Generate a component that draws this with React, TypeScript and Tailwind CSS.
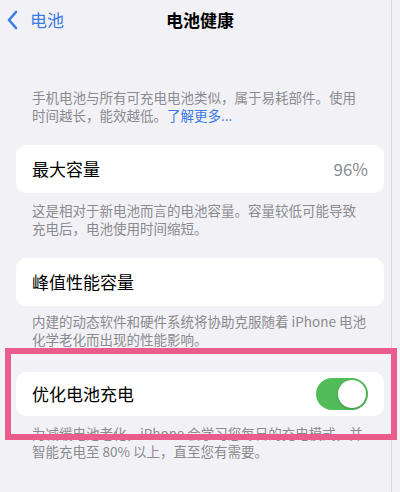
import React from "react";

const font = { fontFamily: '"Noto Sans CJK SC", "Noto Sans", sans-serif' };

function Note({ children }: { children: React.ReactNode }) {
  return <p className="px-8 text-[13.5px] leading-[18px] text-[#8a8a8f]">{children}</p>;
}

function Row({ label, right, tall = true }: { label: string; right?: React.ReactNode; tall?: boolean }) {
  return (
    <div
      className={
        "mx-4 rounded-[10px] bg-white px-4 flex items-center justify-between " + (tall ? "h-12" : "h-[44px]")
      }
    >
      <span className="text-[17px] text-black">{label}</span>
      {right}
    </div>
  );
}

export default function App() {
  return (
    <div className="relative w-[400px] h-[492px] overflow-hidden bg-[#f2f2f6]" style={font}>
      <div className="absolute right-[8px] top-0 h-full w-[1px] bg-[#d6d6d9]" />

      <div className="h-10 flex items-center relative">
        <div className="flex items-center pl-[6px] text-[#3a7ae4]">
          <svg width="14" height="22" viewBox="0 0 14 22" fill="none">
            <path d="M10 3 L3 11 L10 19" stroke="currentColor" strokeWidth="2.6" strokeLinecap="round" strokeLinejoin="round" />
          </svg>
          <span className="ml-[10px] text-[17px]">电池</span>
        </div>
        <span className="absolute left-1/2 -translate-x-1/2 text-[17px] font-bold text-black">电池健康</span>
      </div>

      <div className="mt-[48px]">
        <Note>
          手机电池与所有可充电电池类似，属于易耗部件。使用
          <br />
          时间越长，能效越低。<span className="text-[#3a7ae4]">了解更多...</span>
        </Note>
      </div>

      <div className="mt-[21px]">
        <Row label="最大容量" right={<span className="text-[17px] text-[#8a8a8f]">96%</span>} />
        <div className="mt-[8px]">
          <Note>
            这是相对于新电池而言的电池容量。容量较低可能导致
            <br />
            充电后，电池使用时间缩短。
          </Note>
        </div>
      </div>

      <div className="mt-[21px]">
        <Row label="峰值性能容量" />
        <div className="mt-[6px]">
          <Note>
            内建的动态软件和硬件系统将协助克服随着 iPhone 电池
            <br />
            化学老化而出现的性能影响。
          </Note>
        </div>
      </div>

      <div className="mt-[24px]">
        <Row
          label="优化电池充电"
          tall={false}
          right={
            <div className="w-[52px] h-[32px] rounded-full bg-[#52bd58] p-[2px] flex justify-end">
              <div className="w-[28px] h-[28px] rounded-full bg-white shadow-[0_1px_3px_rgba(0,0,0,0.25)]" />
            </div>
          }
        />
        <div className="mt-[8px]">
          <Note>
            为减缓电池老化，iPhone 会学习您每日的充电模式，并
            <br />
            智能充电至 80% 以上，直至您有需要。
          </Note>
        </div>
      </div>

      <div className="absolute left-[5px] top-[348px] w-[392px] h-[92px] border-[6px] border-[#ea5c8c]" />
    </div>
  );
}
